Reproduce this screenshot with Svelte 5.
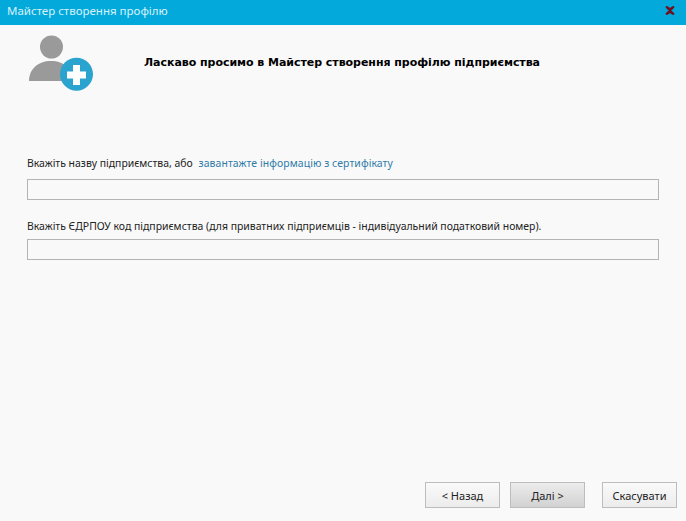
<script>
  let orgName = $state('');
  let orgCode = $state('');
</script>

<div class="wizard">
  <header class="titlebar">
    <span class="title">Майстер створення профілю</span>
    <button class="close" aria-label="Закрити">
      <svg width="10" height="9" viewBox="0 0 10 9"><path d="M1 .5 5 3.2 9 .5 M1 8.5 5 5.8 9 8.5 M1.5 1 8.5 8 M8.5 1 1.5 8" fill="none" stroke="#6e1020" stroke-width="2"/></svg>
    </button>
  </header>

  <div class="intro">
    <svg class="logo" width="68" height="66" viewBox="0 0 68 66">
      <circle cx="23.5" cy="22" r="11.5" fill="#9a9a9a"/>
      <path d="M1 56C1 44 10 36 23 36C36 36 45 44 45 56Z" fill="#9a9a9a"/>
      <circle cx="48.5" cy="49.2" r="16.5" fill="#2aa3cf"/>
      <path d="M45 40H52V46.5H58V53.5H52V60H45V53.5H39V46.5H45Z" fill="#fff"/>
    </svg>
    <h1>Ласкаво просимо в Майстер створення профілю підприємства</h1>
  </div>

  <div class="form">
    <label class="field first">
      <span class="caption">Вкажіть назву підприємства, або <a href="#cert">завантажте інформацію з сертифікату</a></span>
      <input bind:value={orgName} />
    </label>
    <label class="field">
      <span class="caption">Вкажіть ЄДРПОУ код підприємства (для приватних підприємців - індивідуальний податковий номер).</span>
      <input bind:value={orgCode} />
    </label>
  </div>

  <footer class="actions">
    <button class="btn">&lt; Назад</button>
    <button class="btn primary">Далі &gt;</button>
    <button class="btn cancel">Скасувати</button>
  </footer>
</div>

<style>
  :global(body) {
    margin: 0;
    background: #f9f9f9;
  }
  .wizard {
    display: flex;
    flex-direction: column;
    height: 521px;
    background: #f9f9f9;
    font-family: "Noto Sans", sans-serif;
    font-size: 11px;
    color: #222;
    overflow: hidden;
  }
  .titlebar {
    display: flex;
    align-items: center;
    justify-content: space-between;
    box-sizing: border-box;
    height: 25px;
    flex-shrink: 0;
    padding: 0 11px 4px 7px;
    background: #03a9db;
  }
  .title {
    color: #d8f1f9;
    font-size: 11.5px;
  }
  .close {
    display: flex;
    padding: 0;
    border: 0;
    background: none;
  }
  .intro {
    display: flex;
    align-items: flex-start;
    height: 100px;
    padding-left: 28px;
    flex-shrink: 0;
  }
  h1 {
    margin: 31px 0 0 48px;
    font-family: "DejaVu Sans", sans-serif;
    font-size: 11px;
    font-weight: bold;
    letter-spacing: -0.04px;
    color: #000;
  }
  .form {
    display: flex;
    flex-direction: column;
    flex: 1;
    padding: 32px 27px 0;
  }
  .field {
    display: flex;
    flex-direction: column;
    gap: 6px;
    margin-bottom: 20px;
  }
  .first {
    gap: 9px;
  }
  .caption {
    font-size: 10.45px;
    line-height: 13px;
  }
  a {
    margin-left: 3px;
    color: #2f7ba8;
    letter-spacing: 0.08px;
    text-decoration: none;
  }
  input {
    box-sizing: border-box;
    height: 21px;
    border: 1px solid #b4b4b4;
    background: #f9f9f9;
  }
  .actions {
    display: flex;
    padding: 0 9px 13px 0;
    justify-content: flex-end;
    gap: 10px;
  }
  .btn {
    box-sizing: border-box;
    width: 75px;
    height: 26px;
    border: 1px solid #bdbdbd;
    background: linear-gradient(#fafafa, #ececec);
    font: inherit;
    color: #222;
  }
  .primary {
    background: linear-gradient(#ececec, #d2d2d2);
  }
  .cancel {
    margin-left: 7px;
  }
</style>
